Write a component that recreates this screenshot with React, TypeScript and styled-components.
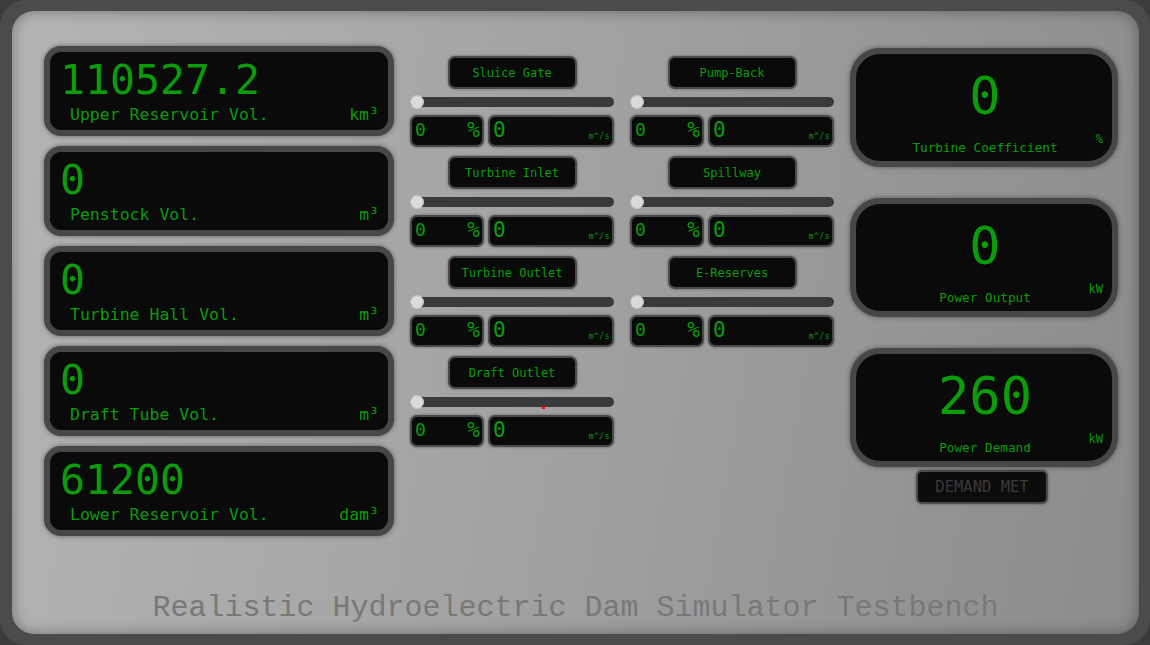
import React from "react";
import styled, { createGlobalStyle } from "styled-components";

const Global = createGlobalStyle`
  html, body { margin: 0; padding: 0; background: #3c3c3c; }
  body { width: 1150px; height: 645px; overflow: hidden; }
  #root { width: 1150px; height: 645px; }
`;

const MONO = `"DejaVu Sans Mono", "Liberation Mono", monospace`;
const GREEN = "#0a9c0a";

const Frame = styled.div`
  box-sizing: border-box;
  width: 1150px;
  height: 645px;
  padding: 11px 11px 11px 12px;
  background: #4b4b4b;
  border-radius: 26px;
`;

const Panel = styled.div`
  box-sizing: border-box;
  height: 100%;
  border-radius: 22px;
  background: linear-gradient(100deg, #b4b4b4 0%, #a3a3a3 45%, #8b8b8b 100%);
  box-shadow: inset 0 0 14px rgba(0, 0, 0, 0.35);
  padding: 35px 20px 0 32px;
  display: flex;
  flex-direction: column;
`;

const Grid = styled.div`
  display: grid;
  grid-template-columns: 350px 204px 204px 268px;
  column-gap: 16px;
  align-items: start;
`;

const Column = styled.div<{ $top?: number; $gap?: number }>`
  display: flex;
  flex-direction: column;
  gap: ${(p) => p.$gap ?? 10}px;
  padding-top: ${(p) => p.$top ?? 0}px;
`;

/* Left volume displays */
const VolDisplay = styled.div`
  box-sizing: border-box;
  height: 90px;
  border: 6px solid #474747;
  border-radius: 17px;
  background: #0a0a0a;
  box-shadow: 0 0 5px rgba(0, 0, 0, 0.45);
  padding: 8px 9px 0 10px;
  display: flex;
  flex-direction: column;
`;

const VolValue = styled.div`
  font-family: ${MONO};
  font-size: 41.5px;
  line-height: 40px;
  color: ${GREEN};
`;

const VolFooter = styled.div`
  display: flex;
  justify-content: space-between;
  align-items: baseline;
  padding-left: 10px;
  margin-top: 5px;
  font-family: ${MONO};
  font-size: 16.5px;
  line-height: 20px;
  color: ${GREEN};
`;

/* Middle control groups */
const Group = styled.div`
  display: flex;
  flex-direction: column;
  align-items: center;
`;

const GateButton = styled.div`
  box-sizing: border-box;
  width: 129px;
  height: 33px;
  border: 2px solid #4a4a4a;
  border-radius: 7px;
  background: #0a0a0a;
  box-shadow: 0 0 3px rgba(0, 0, 0, 0.4);
  display: flex;
  align-items: center;
  justify-content: center;
  font-family: ${MONO};
  font-size: 12px;
  color: ${GREEN};
`;

const Track = styled.div`
  position: relative;
  align-self: stretch;
  height: 10px;
  margin: 8px 0 8px;
  border-radius: 5px;
  background: #3a3a3a;
  display: flex;
  align-items: center;
`;

const Thumb = styled.div`
  box-sizing: border-box;
  width: 14px;
  height: 14px;
  flex-shrink: 0;
  border-radius: 50%;
  background: #dadada;
  border: 1px solid #c4c4c4;
`;

const RedDot = styled.span`
  position: absolute;
  left: 132px;
  top: 9px;
  width: 3px;
  height: 3px;
  background: #e01010;
`;

const ReadoutRow = styled.div`
  align-self: stretch;
  display: flex;
  gap: 4px;
`;

const Readout = styled.div<{ $w: number }>`
  box-sizing: border-box;
  width: ${(p) => p.$w}px;
  height: 32px;
  border: 2px solid #4a4a4a;
  border-radius: 7px;
  background: #0a0a0a;
  box-shadow: 0 0 3px rgba(0, 0, 0, 0.4);
  display: flex;
  justify-content: space-between;
  align-items: flex-end;
  padding: 0 2px 3px 3px;
  font-family: ${MONO};
  color: ${GREEN};
`;

const ReadNum = styled.span<{ $size: number }>`
  font-size: ${(p) => p.$size}px;
  line-height: 24px;
`;

const ReadUnit = styled.span<{ $size: number }>`
  font-size: ${(p) => p.$size}px;
  line-height: ${(p) => (p.$size > 12 ? 24 : 10)}px;
  letter-spacing: ${(p) => (p.$size > 12 ? 0 : 0.5)}px;
`;

/* Right displays */
const BigDisplay = styled.div`
  box-sizing: border-box;
  height: 119px;
  border: 6px solid #474747;
  border-radius: 30px;
  background: #0a0a0a;
  box-shadow: 0 0 5px rgba(0, 0, 0, 0.45);
  padding: 16px 9px 0 11px;
  display: flex;
  flex-direction: column;
`;

const BigValue = styled.div`
  text-align: center;
  font-family: ${MONO};
  font-size: 52px;
  line-height: 52px;
  color: ${GREEN};
`;

const BigFooter = styled.div`
  display: grid;
  grid-template-columns: 1fr auto 1fr;
  align-items: end;
  margin-top: 9px;
  font-family: ${MONO};
  color: ${GREEN};
`;

const BigLabel = styled.span`
  grid-column: 2;
  font-size: 12.7px;
  line-height: 16px;
`;

const BigUnit = styled.span`
  grid-column: 3;
  justify-self: end;
  font-size: 12px;
  line-height: 16px;
  padding-bottom: 9px;
`;

const DemandButton = styled.div`
  box-sizing: border-box;
  align-self: center;
  width: 132px;
  height: 34px;
  margin: -28px 0 0 -4px;
  border: 2px solid #4a4a4a;
  border-radius: 6px;
  background: #0c0c0c;
  box-shadow: 0 0 3px rgba(0, 0, 0, 0.4);
  display: flex;
  align-items: center;
  justify-content: center;
  font-family: ${MONO};
  font-size: 15.5px;
  color: #3a3a3a;
`;

const Title = styled.div`
  margin-top: auto;
  margin-right: 12px;
  padding-bottom: 9px;
  text-align: center;
  font-family: "Courier New", Courier, "Nimbus Mono PS", "Nimbus Mono L", FreeMono, "Liberation Mono", monospace;
  font-size: 30px;
  line-height: 34px;
  color: #787878;
`;

const volumes = [
  { value: "110527.2", label: "Upper Reservoir Vol.", unit: "km³" },
  { value: "0", label: "Penstock Vol.", unit: "m³" },
  { value: "0", label: "Turbine Hall Vol.", unit: "m³" },
  { value: "0", label: "Draft Tube Vol.", unit: "m³" },
  { value: "61200", label: "Lower Reservoir Vol.", unit: "dam³" },
];

const gatesA = ["Sluice Gate", "Turbine Inlet", "Turbine Outlet", "Draft Outlet"];
const gatesB = ["Pump-Back", "Spillway", "E-Reserves"];

const bigs = [
  { value: "0", label: "Turbine Coefficient", unit: "%" },
  { value: "0", label: "Power Output", unit: "kW" },
  { value: "260", label: "Power Demand", unit: "kW" },
];

function Gate({ name, dot }: { name: string; dot?: boolean }) {
  return (
    <Group>
      <GateButton>{name}</GateButton>
      <Track>
        <Thumb />
        {dot && <RedDot />}
      </Track>
      <ReadoutRow>
        <Readout $w={74}>
          <ReadNum $size={18}>0</ReadNum>
          <ReadUnit $size={21}>%</ReadUnit>
        </Readout>
        <Readout $w={126}>
          <ReadNum $size={21}>0</ReadNum>
          <ReadUnit $size={8}>m^/s</ReadUnit>
        </Readout>
      </ReadoutRow>
    </Group>
  );
}

export default function App() {
  return (
    <>
      <Global />
      <Frame>
        <Panel>
          <Grid>
            <Column>
              {volumes.map((v) => (
                <VolDisplay key={v.label}>
                  <VolValue>{v.value}</VolValue>
                  <VolFooter>
                    <span>{v.label}</span>
                    <span>{v.unit}</span>
                  </VolFooter>
                </VolDisplay>
              ))}
            </Column>
            <Column $top={10} $gap={9}>
              {gatesA.map((g, i) => (
                <Gate key={g} name={g} dot={i === 3} />
              ))}
            </Column>
            <Column $top={10} $gap={9}>
              {gatesB.map((g) => (
                <Gate key={g} name={g} />
              ))}
            </Column>
            <Column $top={2} $gap={31}>
              {bigs.map((b) => (
                <BigDisplay key={b.label}>
                  <BigValue>{b.value}</BigValue>
                  <BigFooter>
                    <BigLabel>{b.label}</BigLabel>
                    <BigUnit>{b.unit}</BigUnit>
                  </BigFooter>
                </BigDisplay>
              ))}
              <DemandButton>DEMAND MET</DemandButton>
            </Column>
          </Grid>
          <Title>Realistic Hydroelectric Dam Simulator Testbench</Title>
        </Panel>
      </Frame>
    </>
  );
}
